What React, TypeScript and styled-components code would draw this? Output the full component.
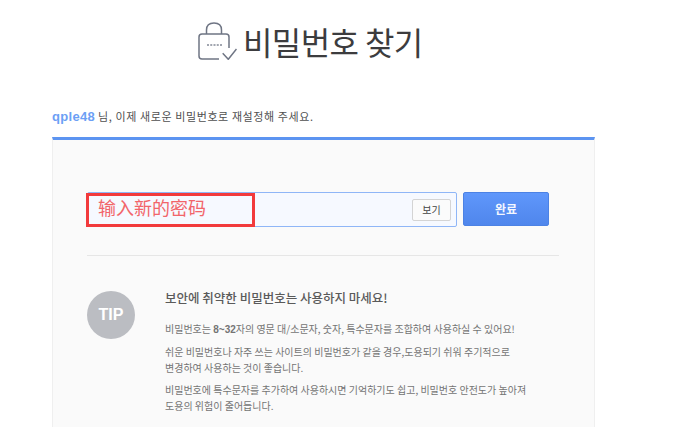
import React from 'react';
import styled, { createGlobalStyle } from 'styled-components';

const GlobalStyle = createGlobalStyle`
  html, body {
    margin: 0;
    padding: 0;
    background: #fff;
    overflow: hidden;
  }
  body {
    font-family: "Noto Sans CJK KR", "Liberation Sans", sans-serif;
  }
`;

const LockIcon: React.FC = () => (
  <svg width="39" height="38" viewBox="0 0 39 38" fill="none">
    <path d="M8.500 12V8C8.500 3.500 11.500 1 16 1S23.500 3.500 23.500 8V12" stroke="#6f7584" strokeWidth="1.500" />
    <path
      d="M21 37H4C2 37 1 36 1 34V15C1 13 2 12 4 12H28C30 12 31 13 31 15V26"
      stroke="#6f7584"
      strokeWidth="1.500"
    />
    <path d="M9 23H24" stroke="#a2a6b0" strokeWidth="2" strokeDasharray="2 1.250" />
    <path d="M24.700 31.300L30.300 37.300L38.500 27" stroke="#6f7584" strokeWidth="1.500" />
  </svg>
);

const App: React.FC = () => {
  return (
    <Page>
      <GlobalStyle />
      <Heading>
        <LockIcon />
        <HeadingText>비밀번호 찾기</HeadingText>
      </Heading>
      <Notice>
        <UserName>qple48</UserName> 님, 이제 새로운 비밀번호로 재설정해 주세요.
      </Notice>
      <Card>
        <FormRow>
          <InputBox>
            <ShowButton>보기</ShowButton>
            <Annotation>输入新的密码</Annotation>
          </InputBox>
          <SubmitButton>완료</SubmitButton>
        </FormRow>
        <Divider />
        <TipRow>
          <TipBadge>TIP</TipBadge>
          <TipBody>
            <TipTitle>보안에 취약한 비밀번호는 사용하지 마세요!</TipTitle>
            <TipText>
              비밀번호는 <b>8~32</b>자의 영문 대/소문자, 숫자, 특수문자를 조합하여 사용하실 수 있어요!
            </TipText>
            <TipText>
              쉬운 비밀번호나 자주 쓰는 사이트의 비밀번호가 같을 경우,도용되기 쉬워 주기적으로
              <br />
              변경하여 사용하는 것이 좋습니다.
            </TipText>
            <TipText>
              비밀번호에 특수문자를 추가하여 사용하시면 기억하기도 쉽고, 비밀번호 안전도가 높아져
              <br />
              도용의 위험이 줄어듭니다.
            </TipText>
          </TipBody>
        </TipRow>
      </Card>
    </Page>
  );
};

const Page = styled.div`
  width: 695px;
  height: 427px;
  overflow: hidden;
  padding: 21px 0 0 52px;
  box-sizing: border-box;
`;

const Heading = styled.div`
  width: 543px;
  height: 40px;
  display: flex;
  align-items: center;
  padding-left: 146px;
  box-sizing: border-box;
  gap: 6px;
`;

const HeadingText = styled.h1`
  margin: 0;
  font-size: 32px;
  font-weight: 400;
  line-height: 40px;
  letter-spacing: -0.6px;
  color: #3c3c3e;
`;

const Notice = styled.p`
  margin: 45px 0 0;
  height: 20px;
  font-size: 11px;
  line-height: 20px;
  letter-spacing: 0.6px;
  color: #505050;
`;

const UserName = styled.span`
  font-family: "Liberation Sans", sans-serif;
  font-size: 13px;
  font-weight: 700;
  letter-spacing: 0.3px;
  color: #6c9ff5;
`;

const Card = styled.div`
  width: 543px;
  height: 300px;
  margin-top: 11px;
  box-sizing: border-box;
  background: #fafafa;
  border-top: 3px solid #5c94f1;
  border-left: 1px solid #efefef;
  border-right: 1px solid #efefef;
  padding: 52px 35px 0 34px;
`;

const FormRow = styled.div`
  display: flex;
  gap: 6px;
`;

const InputBox = styled.div`
  position: relative;
  width: 370px;
  height: 35px;
  box-sizing: border-box;
  border: 1px solid #8fb6f7;
  border-radius: 2px;
  background: #f6f9ff;
  display: flex;
  align-items: center;
  justify-content: flex-end;
  padding-right: 5px;
`;

const ShowButton = styled.div`
  width: 39px;
  height: 22px;
  box-sizing: border-box;
  border: 1px solid #d4d4d4;
  border-radius: 2px;
  background: #fbfbfb;
  font-size: 10px;
  line-height: 20px;
  text-align: center;
  color: #444;
`;

const Annotation = styled.div`
  position: absolute;
  left: -2px;
  top: 0;
  width: 169px;
  height: 34px;
  box-sizing: border-box;
  border: 3px solid #f23a3c;
  background: #f6f9ff;
  padding-left: 9px;
  font-family: "Noto Sans CJK SC", serif;
  font-size: 18px;
  line-height: 22px;
  color: #f2656a;
`;

const SubmitButton = styled.div`
  width: 86px;
  height: 34px;
  box-sizing: border-box;
  border: 1px solid #4c82e4;
  border-radius: 2px;
  background: linear-gradient(#5f97fb, #4f86ec);
  font-size: 12px;
  font-weight: 700;
  line-height: 32px;
  text-align: center;
  color: #f4f7ff;
`;

const Divider = styled.div`
  width: 472px;
  height: 1px;
  margin-top: 28px;
  background: #e6e6e6;
`;

const TipRow = styled.div`
  display: flex;
  gap: 30px;
  margin-top: 35px;
`;

const TipBadge = styled.div`
  flex: none;
  width: 48px;
  height: 48px;
  border-radius: 50%;
  background: #bbbdc2;
  font-family: "Liberation Sans", sans-serif;
  font-size: 16px;
  font-weight: 700;
  line-height: 48px;
  text-align: center;
  color: #fff;
`;

const TipBody = styled.div`
  display: flex;
  flex-direction: column;
  gap: 6px;
`;

const TipTitle = styled.div`
  font-size: 12.5px;
  font-weight: 500;
  line-height: 14px;
  margin-bottom: 10px;
  color: #5a5a5a;
`;

const TipText = styled.p`
  margin: 0;
  font-size: 10px;
  line-height: 16px;
  color: #747474;
  white-space: nowrap;
  b {
    font-family: "Liberation Sans", sans-serif;
    font-weight: 700;
  }
`;

export default App;
